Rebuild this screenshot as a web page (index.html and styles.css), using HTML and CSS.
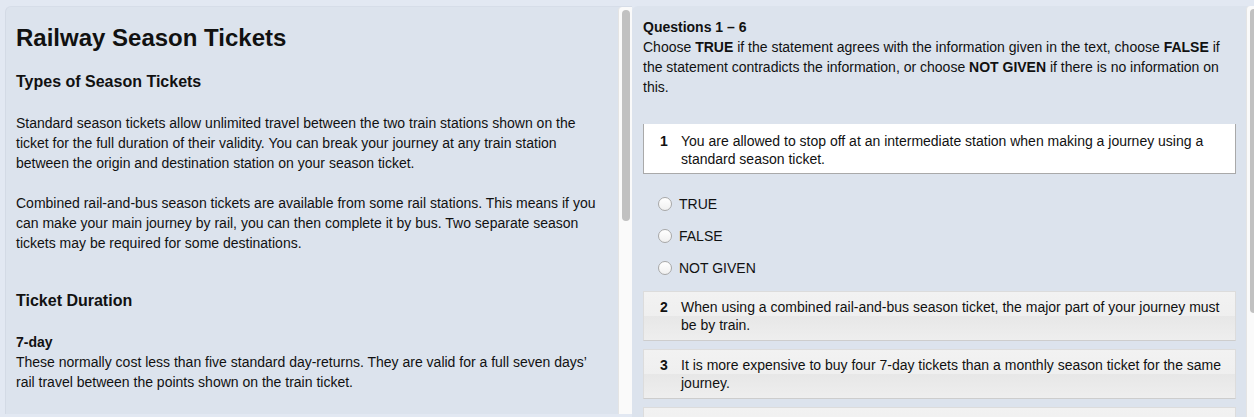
FILE: index.html
```html
<!DOCTYPE html>
<html lang="en">

<head>
    <meta charset="UTF-8">
    <title>Reading - Railway Season Tickets</title>
    <link rel="stylesheet" href="styles.css">
</head>

<body>
    <div class="page">
        <div class="pane pane-left">
            <div class="pane-body passage">
                <h1>Railway Season Tickets</h1>
                <h2>Types of Season Tickets</h2>
                <p>Standard season tickets allow unlimited travel between the two train stations shown on the ticket for the full duration of their validity. You can break your journey at any train station between the origin and destination station on your season ticket.</p>
                <p>Combined rail-and-bus season tickets are available from some rail stations. This means if you can make your main journey by rail, you can then complete it by bus. Two separate season tickets may be required for some destinations.</p>
                <h2 class="section">Ticket Duration</h2>
                <h3>7-day</h3>
                <p class="sub">These normally cost less than five standard day-returns. They are valid for a full seven days’ rail travel between the points shown on the train ticket.</p>
            </div>
            <div class="scrollbar">
                <div class="thumb thumb-left"></div>
            </div>
        </div>

        <div class="pane pane-right">
            <div class="pane-body questions">
                <h4>Questions 1 – 6</h4>
                <p class="intro">Choose <b>TRUE</b> if the statement agrees with the information given in the text, choose <b>FALSE</b> if the statement contradicts the information, or choose <b>NOT GIVEN</b> if there is no information on this.</p>

                <div class="question open">
                    <span class="q-num">1</span>
                    <span class="q-text">You are allowed to stop off at an intermediate station when making a journey using a standard season ticket.</span>
                </div>
                <ul class="options">
                    <li><span class="radio"></span>TRUE</li>
                    <li><span class="radio"></span>FALSE</li>
                    <li><span class="radio"></span>NOT GIVEN</li>
                </ul>

                <div class="question">
                    <span class="q-num">2</span>
                    <span class="q-text">When using a combined rail-and-bus season ticket, the major part of your journey must be by train.</span>
                </div>
                <div class="question">
                    <span class="q-num">3</span>
                    <span class="q-text">It is more expensive to buy four 7-day tickets than a monthly season ticket for the same journey.</span>
                </div>
                <div class="question empty"></div>
            </div>
            <div class="scrollbar">
                <div class="thumb thumb-right"></div>
            </div>
        </div>
    </div>
</body>

</html>
```

FILE: styles.css
```css
* {
    margin: 0;
    padding: 0;
    box-sizing: border-box;
}

li {
    list-style: none;
}

body {
    background: #e2e8f2;
    font-family: "Liberation Sans", Arial, sans-serif;
    font-size: 14px;
    color: #111;
    overflow: hidden;
}

.page {
    display: flex;
    width: 1262px;
    height: 417px;
    padding: 6px 0 0 5px;
}

.pane {
    display: flex;
    background: #dce3ed;
    border-radius: 6px 0 0 0;
    overflow: hidden;
}

.pane-left {
    width: 627px;
    height: 408px;
    border-top: 1px solid #d6dde8;
    border-left: 1px solid #d3dae5;
}

.pane-right {
    width: 628px;
    height: 411px;
}

.pane-body {
    flex: 1;
}

/* passage */
.passage {
    padding: 17px 12px 0 10px;
}

.passage h1 {
    font-size: 24px;
    line-height: 28px;
}

.passage h2 {
    font-size: 16px;
    line-height: 20px;
    margin-top: 20px;
}

.passage h2.section {
    margin-top: 38px;
}

.passage h3 {
    font-size: 14px;
    line-height: 20px;
    margin-top: 21px;
}

.passage p {
    line-height: 20px;
    margin-top: 20px;
}

.passage h2 + p {
    margin-top: 21px;
}

.passage p.sub {
    margin-top: 0;
}

/* questions */
.questions {
    padding: 11px 10px 0 11px;
}

.questions h4 {
    font-size: 14px;
    line-height: 20px;
}

.intro {
    line-height: 20px;
}

.question {
    display: flex;
    line-height: 18px;
    padding: 6px 6px 6px 16px;
    margin-bottom: 8px;
    background: linear-gradient(#f2f2f2 0, #efefef 50%, #e7e7e7 50%, #eeeeee 100%);
    border: 1px solid #dcdcdc;
    border-bottom-color: #cdcdcd;
}

.question.empty {
    height: 50px;
}

.question.open {
    margin-top: 27px;
    margin-bottom: 0;
    padding-top: 8px;
    padding-bottom: 5px;
    background: #fff;
    border: 1px solid #a9a9a9;
    border-top: 0;
}

.q-num {
    width: 21px;
    flex-shrink: 0;
    font-weight: bold;
}

.options {
    margin: 20px 0 13px 15px;
}

.options li {
    display: flex;
    align-items: center;
    line-height: 20px;
    margin-bottom: 12px;
}

.options li:last-child {
    margin-bottom: 0;
}

.radio {
    width: 14px;
    height: 14px;
    margin-right: 7px;
    border: 1px solid #a8a8a8;
    border-radius: 50%;
    background: linear-gradient(#ffffff, #f0f0f0);
}

/* fake scrollbars */
.scrollbar {
    width: 14px;
    flex-shrink: 0;
    background: #fafafa;
    border-left: 1px solid #e4e4e4;
    padding: 3px 0 0 3px;
    border-radius: 4px 0 0 0;
}

.thumb {
    width: 8px;
    background: #c1c1c1;
    border-radius: 4px;
}

.thumb-left {
    height: 211px;
}

.thumb-right {
    height: 304px;
}
```
